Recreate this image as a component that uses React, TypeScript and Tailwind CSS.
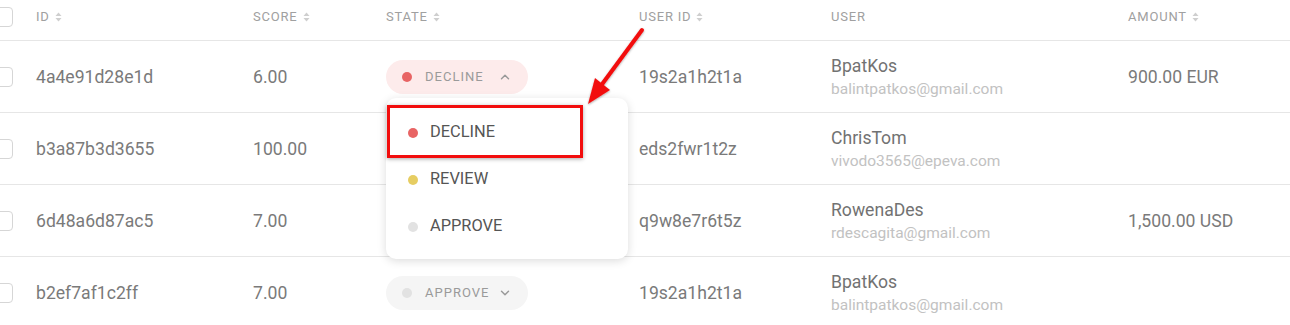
import { ChevronDown, ChevronUp } from 'lucide-react';

type Row = {
  id: string;
  score: string;
  state: 'DECLINE' | 'APPROVE' | null;
  userId: string;
  name: string;
  email: string;
  amount: string;
};

const rows: Row[] = [
  { id: '4a4e91d28e1d', score: '6.00', state: 'DECLINE', userId: '19s2a1h2t1a', name: 'BpatKos', email: 'balintpatkos@gmail.com', amount: '900.00 EUR' },
  { id: 'b3a87b3d3655', score: '100.00', state: null, userId: 'eds2fwr1t2z', name: 'ChrisTom', email: 'vivodo3565@epeva.com', amount: '' },
  { id: '6d48a6d87ac5', score: '7.00', state: null, userId: 'q9w8e7r6t5z', name: 'RowenaDes', email: 'rdescagita@gmail.com', amount: '1,500.00 USD' },
  { id: 'b2ef7af1c2ff', score: '7.00', state: 'APPROVE', userId: '19s2a1h2t1a', name: 'BpatKos', email: 'balintpatkos@gmail.com', amount: '' },
];

const grid = 'grid grid-cols-[36px_217px_133px_253px_192px_297px_1fr] items-center';

function SortIcon() {
  return (
    <svg width="7" height="10" viewBox="0 0 7 10" className="ml-[5px]">
      <path d="M3.5 0.5 L6.5 4 L0.5 4 Z" fill="#cfcfcf" />
      <path d="M3.5 9.5 L6.5 6 L0.5 6 Z" fill="#cfcfcf" />
    </svg>
  );
}

function Checkbox() {
  return <div className="-ml-[7px] h-[20px] w-[20px] rounded-[4px] border border-[#d6d6d6] bg-white" />;
}

function HeaderCell({ label, sort = true }: { label: string; sort?: boolean }) {
  return (
    <div className="flex items-center text-[13px] tracking-[0.8px] text-[#a0a0a0]">
      <span>{label}</span>
      {sort && <SortIcon />}
    </div>
  );
}

function StatePill({ state, open }: { state: 'DECLINE' | 'APPROVE'; open?: boolean }) {
  const decline = state === 'DECLINE';
  return (
    <div
      className={`flex h-[34px] w-[142px] items-center rounded-full pl-[16px] ${
        decline ? 'bg-[#fdebeb]' : 'bg-[#f5f5f5]'
      }`}
    >
      <span className={`h-[10px] w-[10px] rounded-full ${decline ? 'bg-[#e86464]' : 'bg-[#e2e2e2]'}`} />
      <span className="ml-[13px] text-[13px] tracking-[1px] text-[#9a9a9a]">{state}</span>
      <span className="ml-auto mr-[16px] text-[#9a9a9a]">
        {open ? <ChevronUp size={14} strokeWidth={2.5} /> : <ChevronDown size={14} strokeWidth={2.5} />}
      </span>
    </div>
  );
}

function Dropdown() {
  const items = [
    { label: 'DECLINE', dot: 'bg-[#e86464]' },
    { label: 'REVIEW', dot: 'bg-[#e6cd62]' },
    { label: 'APPROVE', dot: 'bg-[#e2e2e2]' },
  ];
  return (
    <div className="absolute left-0 top-full z-10 mt-[4px] w-[242px] rounded-[10px] bg-white pb-[9px] pt-[11px] shadow-[0_2px_10px_rgba(0,0,0,0.14)]">
      {items.map((item) => (
        <div key={item.label} className="flex h-[47px] items-center pl-[22px]">
          <span className={`h-[10px] w-[10px] rounded-full ${item.dot}`} />
          <span className="ml-[12px] text-[16.4px] text-[#555555]">{item.label}</span>
        </div>
      ))}
      {/* annotation box */}
      <div className="absolute left-[1px] top-[7px] h-[53px] w-[196px] border-[3px] border-[#f20d0d] shadow-[0_1px_4px_rgba(0,0,0,0.35)]" />
    </div>
  );
}

function Arrow() {
  return (
    <svg className="pointer-events-none absolute left-0 top-0 z-20" width="1290" height="325">
      <defs>
        <filter id="sh" x="-20%" y="-20%" width="140%" height="140%">
          <feDropShadow dx="0" dy="1" stdDeviation="1.2" floodColor="#000" floodOpacity="0.35" />
        </filter>
      </defs>
      <g filter="url(#sh)">
        <line x1="642" y1="30" x2="600" y2="87" stroke="#f20d0d" strokeWidth="4" strokeLinecap="round" />
        <polygon points="588,104 610,90 595,78" fill="#f20d0d" />
      </g>
    </svg>
  );
}

export default function App() {
  return (
    <div className="relative h-[325px] w-[1290px] overflow-hidden bg-white font-['Roboto',sans-serif]">
      <div className={`${grid} h-[41px] border-b border-[#e6e6e6] pb-[6px]`}>
        <Checkbox />
        <HeaderCell label="ID" />
        <HeaderCell label="SCORE" />
        <HeaderCell label="STATE" />
        <HeaderCell label="USER ID" />
        <HeaderCell label="USER" sort={false} />
        <HeaderCell label="AMOUNT" />
      </div>

      {rows.map((row, i) => (
        <div key={row.id} className={`${grid} h-[72px] border-b border-[#e6e6e6] pt-[1px] text-[17.6px] text-[#7a7a7a]`}>
          <Checkbox />
          <div>{row.id}</div>
          <div>{row.score}</div>
          <div className="relative">
            {row.state && <StatePill state={row.state} open={i === 0} />}
            {i === 0 && <Dropdown />}
          </div>
          <div>{row.userId}</div>
          <div className="flex flex-col">
            <span className="leading-[24px] text-[#727272]">{row.name}</span>
            <span className="text-[15.5px] leading-[22px] text-[#c2c2c2]">{row.email}</span>
          </div>
          <div>{row.amount}</div>
        </div>
      ))}

      <Arrow />
    </div>
  );
}
